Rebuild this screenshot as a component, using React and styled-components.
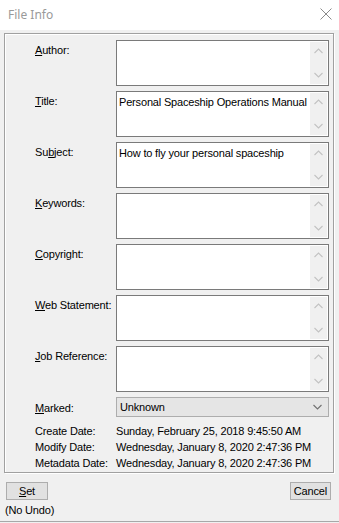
import styled, { createGlobalStyle } from "styled-components";

const GlobalStyle = createGlobalStyle`
  html, body {
    margin: 0;
    padding: 0;
    background: #f0f0f0;
  }
  body {
    font-family: "Liberation Sans", Arial, sans-serif;
    font-size: 11px;
    letter-spacing: -0.17px;
    color: #000;
  }
`;

const Window = styled.div`
  width: 339px;
  height: 522px;
  box-sizing: border-box;
  border-bottom: 1px solid #a8a8a8;
  background: #f0f0f0;
  display: flex;
  flex-direction: column;
`;

const TitleBar = styled.div`
  height: 30px;
  background: #fff;
  display: flex;
  align-items: center;
  justify-content: space-between;
  padding: 0 7px 2px 8px;
  box-sizing: border-box;
`;

const TitleText = styled.span`
  font-family: "Noto Sans", "Open Sans", sans-serif;
  font-size: 12px;
  letter-spacing: 0;
  color: #9a9a9a;
`;

const Panel = styled.div`
  margin: 3px 5px 0 4px;
  border: 1px solid #a0a0a0;
  box-shadow: inset 1px 1px 0 #fff, 1px 1px 0 #fff;
  padding: 6px 4px 1px 30px;
  display: flex;
  flex-direction: column;
`;

const FieldRow = styled.div`
  display: grid;
  grid-template-columns: 81px 213px;
  margin-bottom: ${(p) => p.$gap ?? 5}px;
`;

const Label = styled.div`
  line-height: 14px;
  padding-top: ${(p) => p.$top ?? 3}px;
  white-space: nowrap;
`;

const Key = styled.span`
  text-decoration: underline;
  text-underline-offset: 1px;
`;

const TextBox = styled.div`
  height: 46px;
  box-sizing: border-box;
  border: 1px solid #7a7a7a;
  background: #fff;
  display: flex;
`;

const BoxText = styled.div`
  flex: 1;
  padding: 3px 2px;
  line-height: 14px;
  white-space: nowrap;
  overflow: hidden;
`;

const ScrollBar = styled.div`
  width: 17px;
  flex: none;
  margin: 1px 1px 1px 0;
  background: #f0f0f0;
  display: flex;
  flex-direction: column;
  justify-content: space-between;
  align-items: center;
  padding: 6px 0;
  box-sizing: border-box;
`;

const Select = styled.div`
  height: 20px;
  box-sizing: border-box;
  border: 1px solid #adadad;
  background: #e5e5e5;
  display: flex;
  align-items: center;
  justify-content: space-between;
  padding: 0 6px 0 3px;
`;

const InfoRow = styled.div`
  display: grid;
  grid-template-columns: 81px 213px;
  line-height: 16px;
  white-space: nowrap;
`;

const Footer = styled.div`
  display: flex;
  justify-content: space-between;
  padding: 9px 8px 0 6px;
`;

const Button = styled.button`
  font-family: inherit;
  font-size: 11px;
  letter-spacing: inherit;
  height: 18px;
  min-width: ${(p) => p.$width}px;
  padding: 0 3px;
  border: 1px solid #adadad;
  background: #e1e1e1;
  color: #000;
  line-height: 14px;
`;

const NoUndo = styled.div`
  padding: 3px 0 0 5px;
  line-height: 14px;
`;

const Chevron = ({ up, color = "#c2c2c2" }) => (
  <svg width="9" height="6" viewBox="0 0 9 6">
    <path
      d={up ? "M0.5 5 L4.5 1 L8.5 5" : "M0.5 1 L4.5 5 L8.5 1"}
      fill="none"
      stroke={color}
      strokeWidth="1.1"
    />
  </svg>
);

const fields = [
  { pre: "", key: "A", post: "uthor:", value: "" },
  { pre: "", key: "T", post: "itle:", value: "Personal Spaceship Operations Manual" },
  { pre: "Su", key: "b", post: "ject:", value: "How to fly your personal spaceship" },
  { pre: "", key: "K", post: "eywords:", value: "" },
  { pre: "", key: "C", post: "opyright:", value: "" },
  { pre: "", key: "W", post: "eb Statement:", value: "" },
  { pre: "", key: "J", post: "ob Reference:", value: "" },
];

const dates = [
  ["Create Date:", "Sunday, February 25, 2018 9:45:50 AM"],
  ["Modify Date:", "Wednesday, January 8, 2020 2:47:36 PM"],
  ["Metadata Date:", "Wednesday, January 8, 2020 2:47:36 PM"],
];

export default function App() {
  return (
    <Window>
      <GlobalStyle />
      <TitleBar>
        <TitleText>File Info</TitleText>
        <svg width="12" height="12" viewBox="0 0 12 12">
          <path d="M0.5 0.5 L11.5 11.5 M11.5 0.5 L0.5 11.5" stroke="#8a8a8a" strokeWidth="1" />
        </svg>
      </TitleBar>
      <Panel>
        {fields.map((f, i) => (
          <FieldRow key={i}>
            <Label>
              {f.pre}
              <Key>{f.key}</Key>
              {f.post}
            </Label>
            <TextBox>
              <BoxText>{f.value}</BoxText>
              <ScrollBar>
                <Chevron up />
                <Chevron />
              </ScrollBar>
            </TextBox>
          </FieldRow>
        ))}
        <FieldRow $gap={6}>
          <Label $top={4}>
            <Key>M</Key>arked:
          </Label>
          <Select>
            <span>Unknown</span>
            <Chevron color="#707070" />
          </Select>
        </FieldRow>
        {dates.map(([label, value]) => (
          <InfoRow key={label}>
            <span>{label}</span>
            <span>{value}</span>
          </InfoRow>
        ))}
      </Panel>
      <Footer>
        <Button $width={42}>
          <Key>S</Key>et
        </Button>
        <Button $width={40}>Cancel</Button>
      </Footer>
      <NoUndo>(No Undo)</NoUndo>
    </Window>
  );
}
